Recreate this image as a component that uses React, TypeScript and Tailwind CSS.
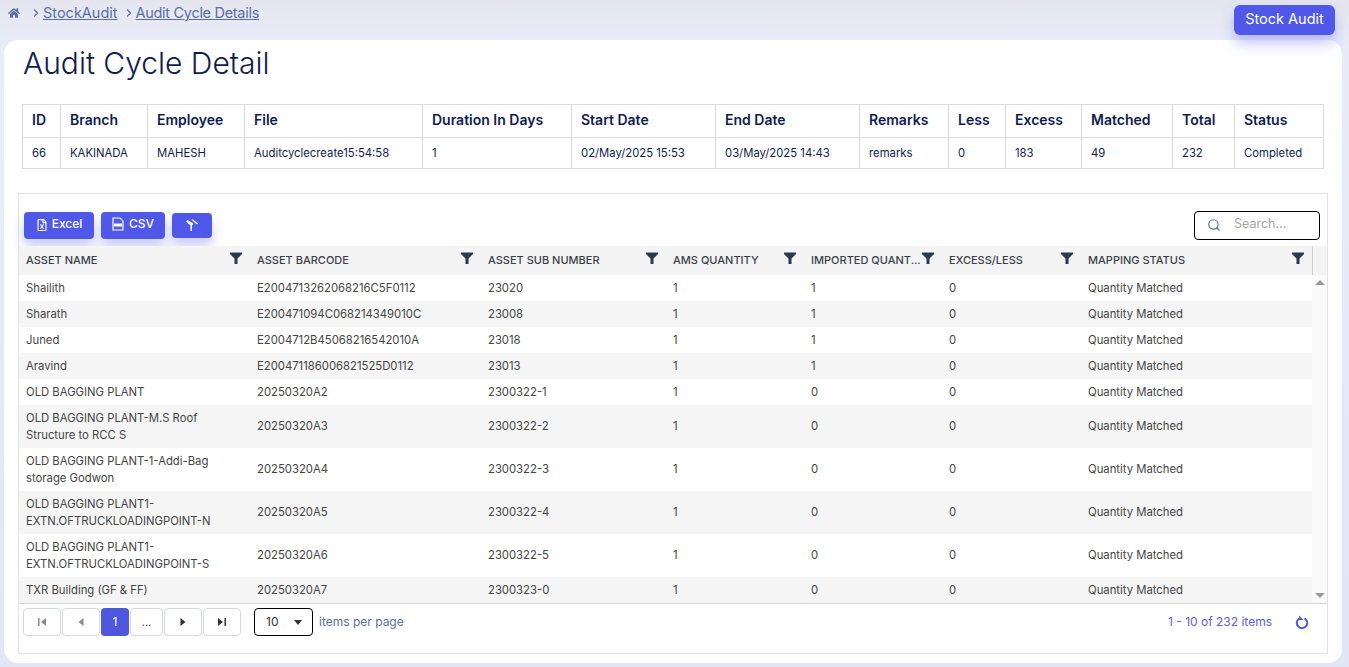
import { ChevronRight, Search } from "lucide-react";
import { FaHome, FaRegFileExcel } from "react-icons/fa";

const summaryCols = [
  { label: "ID", value: "66", w: "w-[38px]" },
  { label: "Branch", value: "KAKINADA", w: "w-[87px]" },
  { label: "Employee", value: "MAHESH", w: "w-[97px]" },
  { label: "File", value: "Auditcyclecreate15:54:58", w: "w-[178px]" },
  { label: "Duration In Days", value: "1", w: "w-[149px]" },
  { label: "Start Date", value: "02/May/2025 15:53", w: "w-[144px]" },
  { label: "End Date", value: "03/May/2025 14:43", w: "w-[144px]" },
  { label: "Remarks", value: "remarks", w: "w-[89px]" },
  { label: "Less", value: "0", w: "w-[57px]" },
  { label: "Excess", value: "183", w: "w-[76px]" },
  { label: "Matched", value: "49", w: "w-[91px]" },
  { label: "Total", value: "232", w: "w-[62px]" },
  { label: "Status", value: "Completed", w: "w-[89px]" },
];

const gridCols = [
  { label: "ASSET NAME", w: "w-[231px]" },
  { label: "ASSET BARCODE", w: "w-[231px]" },
  { label: "ASSET SUB NUMBER", w: "w-[185px]" },
  { label: "AMS QUANTITY", w: "w-[138px]" },
  { label: "IMPORTED QUANT...", w: "w-[138px]" },
  { label: "EXCESS/LESS", w: "w-[139px]" },
  { label: "MAPPING STATUS", w: "w-[231px]" },
];

const rows = [
  ["Shailith", "E2004713262068216C5F0112", "23020", "1", "1", "0"],
  ["Sharath", "E200471094C068214349010C", "23008", "1", "1", "0"],
  ["Juned", "E2004712B45068216542010A", "23018", "1", "1", "0"],
  ["Aravind", "E200471186006821525D0112", "23013", "1", "1", "0"],
  ["OLD BAGGING PLANT", "20250320A2", "2300322-1", "1", "0", "0"],
  ["OLD BAGGING PLANT-M.S Roof Structure to RCC S", "20250320A3", "2300322-2", "1", "0", "0"],
  ["OLD BAGGING PLANT-1-Addi-Bag storage Godwon", "20250320A4", "2300322-3", "1", "0", "0"],
  ["OLD BAGGING PLANT1- EXTN.OFTRUCKLOADINGPOINT-N", "20250320A5", "2300322-4", "1", "0", "0"],
  ["OLD BAGGING PLANT1- EXTN.OFTRUCKLOADINGPOINT-S", "20250320A6", "2300322-5", "1", "0", "0"],
  ["TXR Building (GF & FF)", "20250320A7", "2300323-0", "1", "0", "0"],
];

function Funnel() {
  return (
    <svg width="12" height="12" viewBox="0 0 12 12" className="absolute right-[8px] top-[6px]">
      <path d="M0 0.5h12v1.5L7.5 6.5V12h-3V6.5L0 2z" fill="#2c3850" />
    </svg>
  );
}

function CsvIcon() {
  return (
    <svg width="12" height="14" viewBox="0 0 12 14" fill="none" stroke="white" strokeWidth="1.2">
      <path d="M1 1h7l3 3v9H1z" />
      <rect x="2" y="6.5" width="8" height="3" fill="white" stroke="none" />
    </svg>
  );
}

function ClearFilterIcon() {
  return (
    <svg width="14" height="14" viewBox="0 0 14 14" fill="white">
      <path d="M1 3.5 2.5 2l5 3 1 1-1.5 1.500V13H5.500V7.500z" />
      <path d="M6 1.500h2l5 4-1 1z" />
    </svg>
  );
}

function PagerIcon({ kind }: { kind: "first" | "prev" | "next" | "last" }) {
  return (
    <svg width="10" height="10" viewBox="0 0 10 10" fill={kind === "first" || kind === "prev" ? "#8a8a8a" : "#333"}>
      {kind === "first" && <path d="M1 1h1.500v8H1zM9 1v8L4 5z" />}
      {kind === "prev" && <path d="M7.500 1v8l-5-4z" />}
      {kind === "next" && <path d="M2.500 1v8l5-4z" />}
      {kind === "last" && <path d="M1 1v8l5-4zM7.500 1H9v8H7.500z" />}
    </svg>
  );
}

function PagerButton({ children, w }: { children: React.ReactNode; w: string }) {
  return (
    <button className={`${w} h-[28px] flex items-center justify-center rounded border border-[#d5d8dc] bg-white text-[#444]`}>
      {children}
    </button>
  );
}

export default function App() {
  return (
    <div className="h-[667px] overflow-hidden bg-gradient-to-b from-[#e4e5ee] from-0% via-[#e9ecf8] via-[6%] to-[#e2e6f5] font-['Inter',sans-serif] text-[#0f1c50]">
      <div className="h-[40px] flex justify-between pl-[8px] pr-[14px]">
        <div className="flex items-center h-[26px] text-[#5a6f9f] text-[14.5px]">
          <FaHome size={12} />
          <ChevronRight size={12} strokeWidth={2.5} className="ml-[10px] mr-[1px]" />
          <a className="underline">StockAudit </a>
          <ChevronRight size={12} strokeWidth={2.5} className="ml-[5px] mr-[1px]" />
          <a className="underline tracking-[-0.3px]">Audit Cycle Details</a>
        </div>
        <button className="relative z-10 mt-[5px] h-[30px] w-[101px] pb-[2px] rounded-md bg-[#5058ea] text-white text-[14.5px] shadow-[0_8px_14px_rgba(80,88,234,0.35)]">
          Stock Audit
        </button>
      </div>

      <div className="ml-[4px] mr-[7px] h-[623px] rounded-[14px] bg-white">
        <h1 className="pl-[19px] pt-[4px] h-[64px] text-[30px] leading-[38px] font-light text-[#0f1c50]">Audit Cycle Detail</h1>

        <table className="ml-[18px] w-[1301px] table-fixed border-collapse">
          <thead>
            <tr>
              {summaryCols.map((c) => (
                <th key={c.label} className={`${c.w} h-[33px] border border-[#dadada] pl-[9px] pb-[3px] text-left text-[14px] font-semibold whitespace-nowrap`}>
                  {c.label}
                </th>
              ))}
            </tr>
          </thead>
          <tbody>
            <tr>
              {summaryCols.map((c) => (
                <td key={c.label} className="h-[31px] border border-[#dadada] pl-[9px] text-[11.3px] whitespace-nowrap">
                  {c.value}
                </td>
              ))}
            </tr>
          </tbody>
        </table>

        <div className="ml-[14px] mt-[24px] w-[1310px] h-[461px] border border-[#e2e2e2]">
          <div className="h-[52px] flex items-start justify-between pl-[5px] pr-[7px] pt-[18px]">
            <div className="flex items-start gap-[7px]">
              <button className="h-[27px] w-[70px] pb-[3px] flex items-center justify-center gap-[4px] rounded bg-[#5058ea] text-white text-[12px] font-medium shadow-[0_8px_12px_rgba(80,88,234,0.3)]">
                <FaRegFileExcel size={12} className="mt-[2px]" />
                Excel
              </button>
              <button className="h-[27px] w-[64px] pb-[3px] flex items-center justify-center gap-[5px] rounded bg-[#5058ea] text-white text-[12px] font-medium shadow-[0_8px_12px_rgba(80,88,234,0.3)]">
                <CsvIcon />
                CSV
              </button>
              <button className="mt-[1px] h-[25px] w-[40px] pb-[2px] flex items-center justify-center rounded bg-[#5058ea] text-white shadow-[0_8px_12px_rgba(80,88,234,0.3)]">
                <ClearFilterIcon />
              </button>
            </div>
            <div className="h-[29px] w-[126px] -mt-[1px] pb-[2px] flex items-center rounded border border-black bg-white pl-[12px] text-[12.5px] text-[#a5a5a5]">
              <Search size={14} className="text-[#5a6f9f] mr-[13px]" />
              Search...
            </div>
          </div>

          <div className="flex">
            <table className="w-[1293px] table-fixed border-collapse text-[11.3px] text-[#444]">
              <thead>
                <tr className="bg-[#f4f4f5]">
                  {gridCols.map((c) => (
                    <th key={c.label} className={`${c.w} h-[29px] relative pl-[7px] text-left text-[11px] font-medium text-[#3c3f4a] whitespace-nowrap`}>
                      {c.label}
                      <Funnel />
                    </th>
                  ))}
                </tr>
              </thead>
              <tbody>
                {rows.map((r, i) => (
                  <tr key={r[1]} className={i % 2 === 1 ? "bg-[#f5f5f5]" : "bg-white"}>
                    {r.map((v, j) => (
                      <td key={j} className="px-[7px] py-[4.5px] leading-[17px]">
                        {v}
                      </td>
                    ))}
                    <td className="px-[7px]">Quantity Matched</td>
                  </tr>
                ))}
              </tbody>
            </table>
            <div className="w-[15px] flex flex-col">
              <div className="h-[29px] bg-[#f4f4f5] border-l border-[#cfcfcf]" />
              <div className="flex-1 bg-[#fafafa] flex flex-col justify-between items-center py-[5px]">
                <div className="w-0 h-0 border-x-[5px] border-x-transparent border-b-[5px] border-b-[#999]" />
                <div className="w-0 h-0 border-x-[5px] border-x-transparent border-t-[5px] border-t-[#999]" />
              </div>
            </div>
          </div>

          <div className="h-[50px] border-t border-[#d5d5d5] flex items-start justify-between pl-[4px] pr-[18px] pt-[4px]">
            <div className="flex items-center">
              <div className="flex gap-[1px]">
                <PagerButton w="w-[38px]"><PagerIcon kind="first" /></PagerButton>
                <PagerButton w="w-[38px]"><PagerIcon kind="prev" /></PagerButton>
                <button className="w-[28px] h-[28px] rounded bg-[#4f57dd] text-white text-[12px]">1</button>
                <PagerButton w="w-[33px]"><span className="text-[11px]">...</span></PagerButton>
                <PagerButton w="w-[38px]"><PagerIcon kind="next" /></PagerButton>
                <PagerButton w="w-[38px]"><PagerIcon kind="last" /></PagerButton>
              </div>
              <div className="ml-[13px] w-[59px] h-[28px] flex items-center justify-between rounded border border-black pl-[11px] pr-[10px] text-[12px] text-[#333]">
                10
                <span className="w-0 h-0 border-x-[4px] border-x-transparent border-t-[5px] border-t-[#333]" />
              </div>
              <span className="ml-[6px] text-[12px] text-[#5a6f9f]">items per page</span>
            </div>
            <div className="flex items-center h-[28px] text-[12px] text-[#5b60ea]">
              1 - 10 of 232 items
              <svg width="14" height="14" viewBox="0 0 14 14" fill="none" stroke="#4f57dd" strokeWidth="2" className="ml-[23px]">
                <path d="M4.500 3.300A5.200 5.200 0 1 0 9.500 3.300" />
                <path d="M4 0.500v4.500h4.500z" fill="#4f57dd" stroke="none" />
              </svg>
            </div>
          </div>
        </div>
      </div>
    </div>
  );
}
